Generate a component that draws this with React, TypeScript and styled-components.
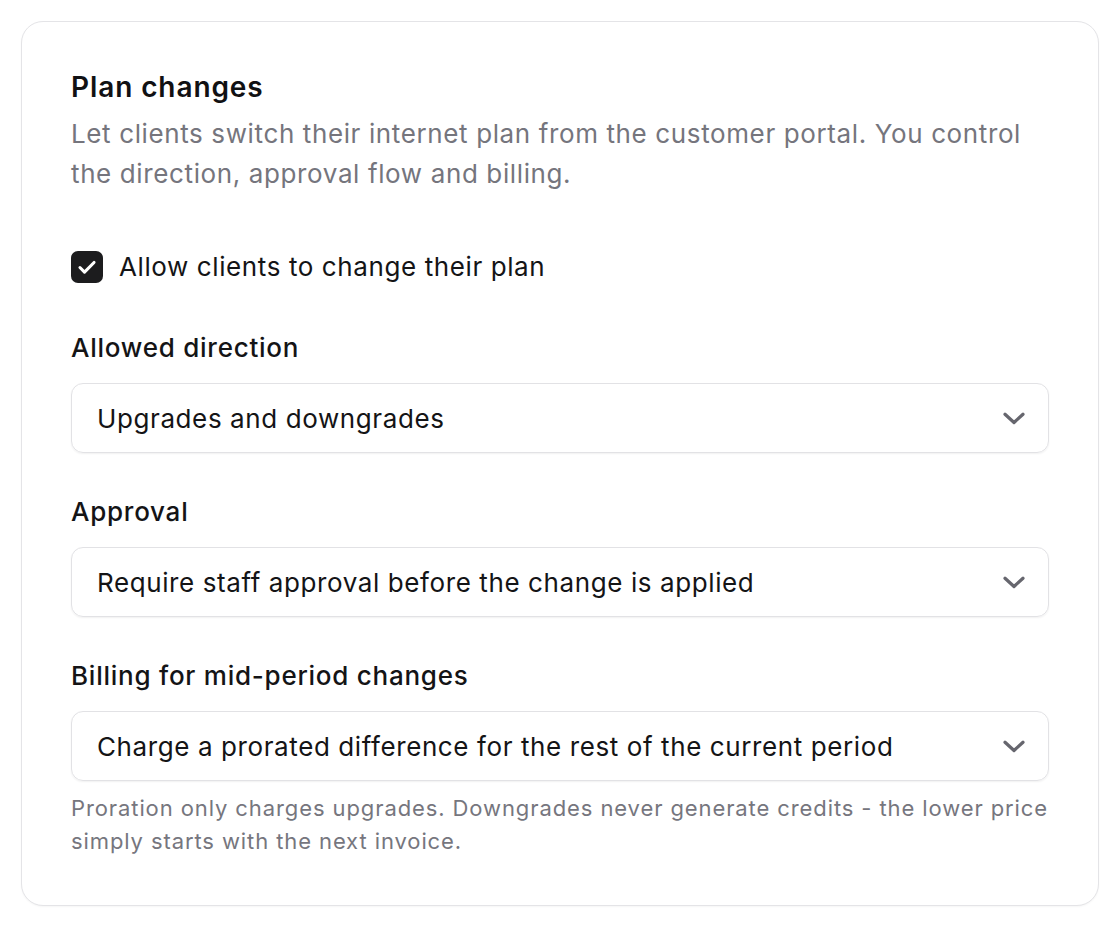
import * as React from "react";
import styled, { createGlobalStyle } from "styled-components";

const GlobalStyle = createGlobalStyle`
  body {
    margin: 0;
    background: #ffffff;
    font-family: Inter, "Noto Sans", "Liberation Sans", sans-serif;
    -webkit-font-smoothing: antialiased;
  }
`;

const Page = styled.div`
  padding: 21px;
`;

const Card = styled.section`
  width: 1078px;
  box-sizing: border-box;
  border: 1px solid #e4e4e7;
  border-radius: 22px;
  padding: 47px 49px 47px 49px;
  background: #fff;
  box-shadow: 0 1px 2px rgba(0, 0, 0, 0.04);
`;

const Title = styled.h2`
  margin: 0;
  font-size: 28px;
  line-height: 36px;
  font-weight: 600;
  color: #111113;
  letter-spacing: 0.9px;
`;

const Description = styled.p`
  margin: 9px 0 0;
  font-size: 26px;
  line-height: 40px;
  color: #75757d;
  letter-spacing: 0.62px;
`;

const CheckRow = styled.label`
  display: flex;
  align-items: center;
  gap: 16px;
  margin-top: 57px;
  font-size: 26px;
  line-height: 32px;
  color: #141416;
  letter-spacing: 0.6px;
`;

const CheckBox = styled.span`
  width: 32px;
  height: 32px;
  border-radius: 7px;
  background: #1c1c1e;
  display: flex;
  align-items: center;
  justify-content: center;
  flex-shrink: 0;
`;

const Field = styled.div<{ $first?: boolean }>`
  margin-top: ${(p) => (p.$first ? "47px" : "41px")};
`;

const FieldLabel = styled.div`
  font-size: 26px;
  line-height: 36px;
  font-weight: 500;
  color: #141416;
  margin-bottom: 17px;
  letter-spacing: 0.75px;
`;

const Select = styled.div`
  height: 70px;
  box-sizing: border-box;
  border: 1px solid #e2e2e5;
  border-radius: 12px;
  box-shadow: 0 1px 2px rgba(0, 0, 0, 0.06);
  display: flex;
  align-items: center;
  justify-content: space-between;
  padding: 0 19px 0 25px;
  font-size: 26px;
  color: #141416;
  letter-spacing: 0.6px;
`;

const Help = styled.p`
  margin: 11px 0 0;
  font-size: 22px;
  line-height: 33px;
  color: #76767e;
  letter-spacing: 0.9px;
`;

const Chevron = () => (
  <svg width="30" height="30" viewBox="0 0 24 24" fill="none">
    <path
      d="M4.8 9l7.2 6.6 7.2-6.6"
      stroke="#66666e"
      strokeWidth="2.6"
      strokeLinecap="round"
      strokeLinejoin="round"
    />
  </svg>
);

const fields = [
  { label: "Allowed direction", value: "Upgrades and downgrades" },
  { label: "Approval", value: "Require staff approval before the change is applied" },
  {
    label: "Billing for mid-period changes",
    value: "Charge a prorated difference for the rest of the current period",
  },
];

export default function App() {
  return (
    <Page>
      <GlobalStyle />
      <Card>
        <Title>Plan changes</Title>
        <Description>
          Let clients switch their internet plan from the customer portal. You control the
          direction, approval flow and billing.
        </Description>
        <CheckRow>
          <CheckBox>
            <svg width="26" height="26" viewBox="0 0 24 24" fill="none">
              <path
                d="M5.5 12.5l4.2 4.2L18.5 7.8"
                stroke="#fff"
                strokeWidth="2.8"
                strokeLinecap="round"
                strokeLinejoin="round"
              />
            </svg>
          </CheckBox>
          Allow clients to change their plan
        </CheckRow>
        {fields.map((f, i) => (
          <Field key={f.label} $first={i === 0}>
            <FieldLabel>{f.label}</FieldLabel>
            <Select>
              <span>{f.value}</span>
              <Chevron />
            </Select>
          </Field>
        ))}
        <Help>
          Proration only charges upgrades. Downgrades never generate credits - the lower price
          simply starts with the next invoice.
        </Help>
      </Card>
    </Page>
  );
}
